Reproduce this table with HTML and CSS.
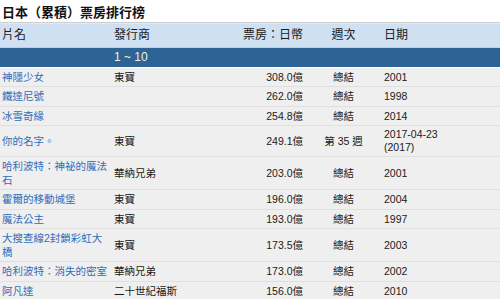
FILE: index.html
```html
<!DOCTYPE html>
<html lang="zh-Hant">
<head>
<meta charset="utf-8">
<link rel="stylesheet" href="styles.css">
</head>
<body>
<h1 class="title">日本（累積）票房排行榜</h1>
<table class="rank">
  <colgroup>
    <col class="c-name"><col class="c-dist"><col class="c-gross"><col class="c-week"><col class="c-date"><col class="c-extra">
  </colgroup>
  <thead>
    <tr class="head">
      <th>片名</th><th>發行商</th><th class="num">票房：日幣</th><th class="mid">週次</th><th>日期</th><th></th>
    </tr>
  </thead>
  <tbody>
    <tr class="group"><td></td><td colspan="5">1 ~ 10</td></tr>
    <tr><td><a href="#">神隱少女</a></td><td>東寶</td><td class="num">308.0億</td><td class="mid">總結</td><td>2001</td><td></td></tr>
    <tr><td><a href="#">鐵達尼號</a></td><td></td><td class="num">262.0億</td><td class="mid">總結</td><td>1998</td><td></td></tr>
    <tr><td><a href="#">冰雪奇緣</a></td><td></td><td class="num">254.8億</td><td class="mid">總結</td><td>2014</td><td></td></tr>
    <tr><td><a href="#">你的名字。</a></td><td>東寶</td><td class="num">249.1億</td><td class="mid">第 35 週</td><td class="date">2017-04-23 (2017)</td><td></td></tr>
    <tr><td><a href="#">哈利波特：神祕的魔法石</a></td><td>華納兄弟</td><td class="num">203.0億</td><td class="mid">總結</td><td>2001</td><td></td></tr>
    <tr><td><a href="#">霍爾的移動城堡</a></td><td>東寶</td><td class="num">196.0億</td><td class="mid">總結</td><td>2004</td><td></td></tr>
    <tr><td><a href="#">魔法公主</a></td><td>東寶</td><td class="num">193.0億</td><td class="mid">總結</td><td>1997</td><td></td></tr>
    <tr><td><a href="#">大搜查線2封鎖彩虹大橋</a></td><td>東寶</td><td class="num">173.5億</td><td class="mid">總結</td><td>2003</td><td></td></tr>
    <tr><td><a href="#">哈利波特：消失的密室</a></td><td>華納兄弟</td><td class="num">173.0億</td><td class="mid">總結</td><td>2002</td><td></td></tr>
    <tr><td><a href="#">阿凡達</a></td><td>二十世紀福斯</td><td class="num">156.0億</td><td class="mid">總結</td><td>2010</td><td></td></tr>
  </tbody>
</table>
</body>
</html>
```
FILE: styles.css
```css
html, body {
  margin: 0;
  padding: 0;
  background: #fff;
}
body {
  font-family: "Liberation Sans", "Noto Sans CJK TC", sans-serif;
  color: #1a1a1a;
}
.title {
  margin: 0;
  padding: 4px 2px 0;
  height: 18px;
  font-size: 13px;
  line-height: 18px;
  font-weight: bold;
  color: #111;
  border-bottom: 1px solid #cfcfcf;
  box-shadow: 0 1px 0 #e8e8e8;
}
.rank {
  width: 500px;
  margin-top: 1px;
  border-collapse: collapse;
  table-layout: fixed;
  font-size: 10.5px;
}
.c-name { width: 112px; }
.c-dist { width: 87px; }
.c-gross { width: 106px; }
.c-week { width: 77px; }
.c-date { width: 80px; }
.c-extra { width: 38px; }

.head th {
  background: #cfe0f2;
  font-weight: normal;
  font-size: 12px;
  text-align: left;
  line-height: 17px;
  padding: 3px 2px 3px;
  color: #1a1a1a;
  border-bottom: 1px solid #bcd0e4;
}
.head th.num { text-align: right; }
.head th.mid { text-align: center; }
.group td {
  background: #2e6396;
  color: #f2f2dc;
  font-size: 12px;
  line-height: 15px;
  padding: 2px 2px 2px;
  border-bottom: 1px solid #ffffff;
}
tbody td {
  background: #efefef;
  line-height: 14.3px;
  padding: 2px 2px 2px;
  border-bottom: 1px solid #e0e0e0;
  vertical-align: middle;
  word-break: break-all;
}
td.num { text-align: right; }
td.mid { text-align: center; }
td.date {
  line-height: 12.4px;
  padding-top: 2.5px;
  padding-bottom: 2.5px;
  word-break: normal;
}
a {
  color: #2f6dbb;
  text-decoration: none;
}
```
